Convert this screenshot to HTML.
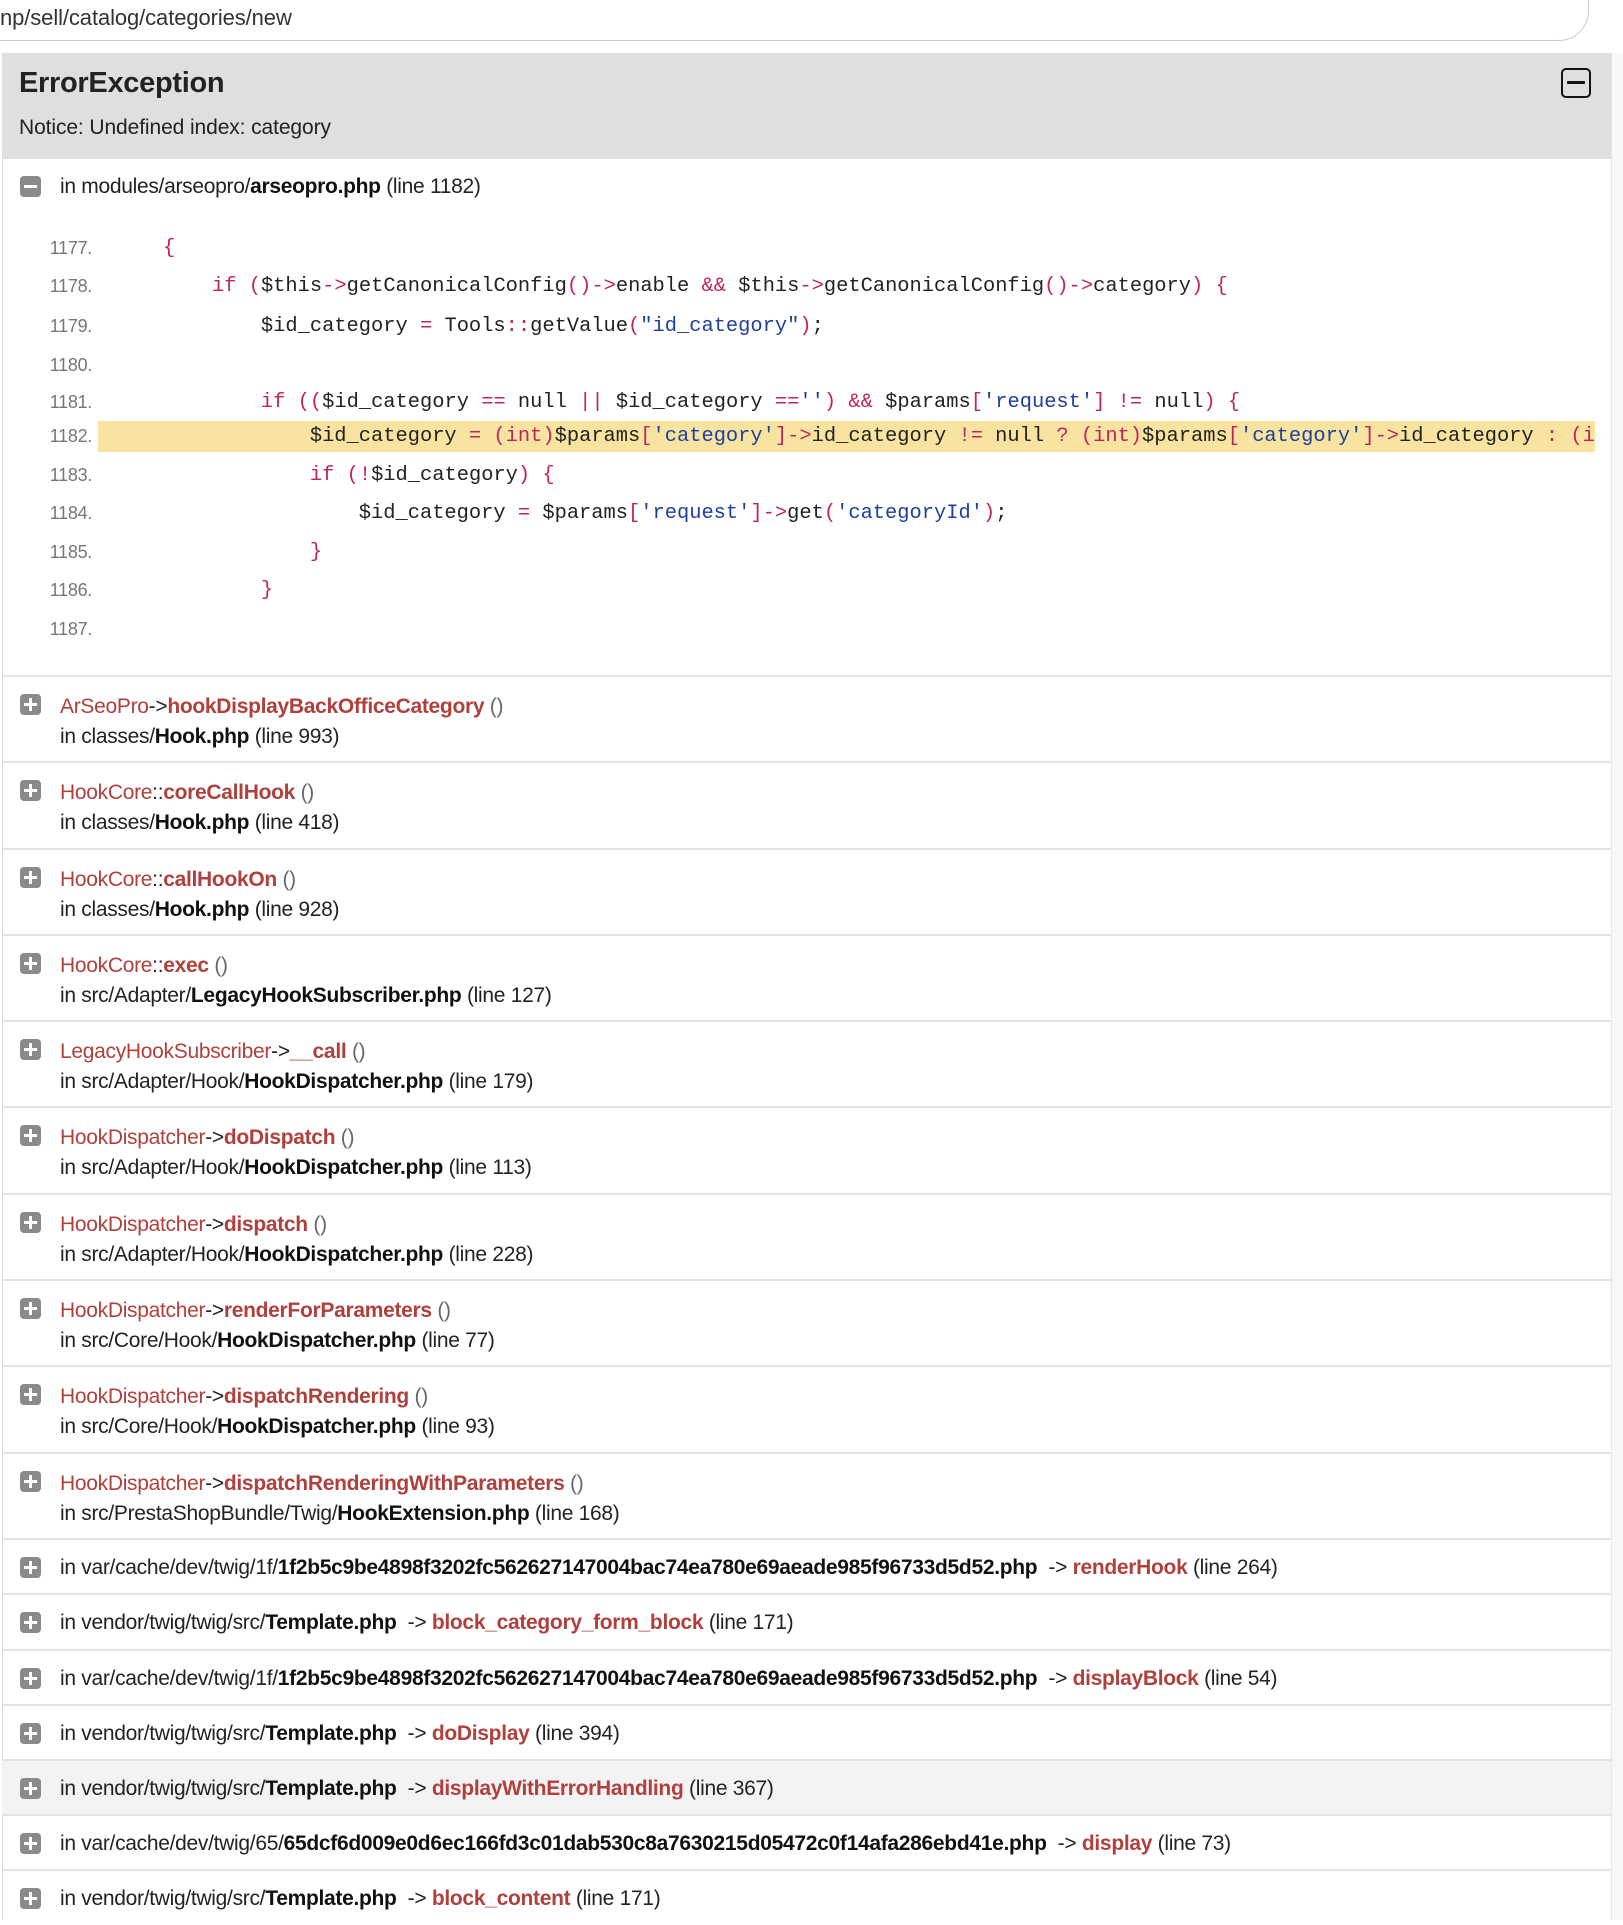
<!DOCTYPE html>
<html><head><meta charset="utf-8">
<style>
*{margin:0;padding:0;box-sizing:border-box}
html,body{width:1623px;height:1920px;overflow:hidden;background:#fff;font-family:"Liberation Sans",Arial,sans-serif;color:#222}
.url{position:absolute;left:-20px;top:-20px;width:1609px;height:61px;border:1.5px solid #ccc;border-radius:0 0 30px 0;border-top:none;border-left:none}
.urltext{position:absolute;left:0;top:5px;font-size:22px;color:#333;letter-spacing:-0.1px}
.side{position:absolute;left:1611px;top:53px;width:12px;height:1867px;background:#f7f7f7;border-left:1px solid #e6e6e6}
.lb{position:absolute;left:2px;top:53px;width:1px;height:1867px;background:#ddd}
.head{position:absolute;left:2px;top:53px;width:1609px;height:106px;background:#dfdfdf}
.head h1{position:absolute;left:17px;top:14px;font-size:29px;font-weight:bold;color:#222;letter-spacing:-0.3px}
.head p{position:absolute;left:17px;top:63px;font-size:21px;color:#222;letter-spacing:-0.1px}
.mbox{position:absolute;left:1559px;top:15px;width:30px;height:30px;border:2.5px solid #111;border-radius:5px}
.mbox:after{content:"";position:absolute;left:4px;right:4px;top:11px;height:3px;background:#111}
.ic{position:absolute;left:20px;width:21px;height:21px;background:#8a8a8a;border-radius:4px}
.ic:before{content:"";position:absolute;left:4px;right:4px;top:9px;height:3px;background:#fff}
.ic.p:after{content:"";position:absolute;top:4px;bottom:4px;left:9px;width:3px;background:#fff}
.t{position:absolute;left:60px;font-size:21px;white-space:nowrap;letter-spacing:-0.3px;color:#222}
.r{color:#b0403c}
b{font-weight:bold;color:#111}
.br{font-weight:bold;color:#b0403c}
.g{color:#666}
.row{position:absolute;left:2px;width:1609px;border-top:2px solid #e3e3e3}
.ln{position:absolute;left:20px;width:72px;text-align:right;font-size:18px;color:#777;letter-spacing:-0.3px}
.cd{position:absolute;left:163px;font-family:"Liberation Mono","DejaVu Sans Mono",monospace;font-size:20.4px;white-space:pre;color:#222;line-height:30px}
.k{color:#c0245e}
.s{color:#1f3f9e}
.hl{position:absolute;left:98px;top:421px;width:1497px;height:31px;background:#f8e3a1}
</style></head><body>
<div class="url"></div>
<div class="urltext">np/sell/catalog/categories/new</div>
<div class="side"></div>
<div class="lb"></div>
<div class="head"><h1>ErrorException</h1><p>Notice: Undefined index: category</p><div class="mbox"></div></div>

<div class="ic" style="top:176px"></div>
<div class="t" style="top:175px">in modules/arseopro/<b>arseopro.php</b> (line 1182)</div>

<div class="hl"></div>
<div class="ln" style="top:238px">1177.</div><div class="cd" style="top:234px"><span class="k">{</span></div>
<div class="ln" style="top:276px">1178.</div><div class="cd" style="top:272px">    <span class="k">if</span> <span class="k">(</span>$this<span class="k">-&gt;</span>getCanonicalConfig<span class="k">()</span><span class="k">-&gt;</span>enable <span class="k">&amp;&amp;</span> $this<span class="k">-&gt;</span>getCanonicalConfig<span class="k">()</span><span class="k">-&gt;</span>category<span class="k">)</span> <span class="k">{</span></div>
<div class="ln" style="top:316px">1179.</div><div class="cd" style="top:312px">        $id_category <span class="k">=</span> Tools<span class="k">::</span>getValue<span class="k">(</span><span class="s">"id_category"</span><span class="k">)</span>;</div>
<div class="ln" style="top:355px">1180.</div>
<div class="ln" style="top:392px">1181.</div><div class="cd" style="top:388px">        <span class="k">if</span> <span class="k">((</span>$id_category <span class="k">==</span> null <span class="k">||</span> $id_category <span class="k">==</span><span class="s">''</span><span class="k">)</span> <span class="k">&amp;&amp;</span> $params<span class="k">[</span><span class="s">'request'</span><span class="k">]</span> <span class="k">!=</span> null<span class="k">)</span> <span class="k">{</span></div>
<div class="ln" style="top:426px">1182.</div><div class="cd" style="top:422px;width:1432px;overflow:hidden">            $id_category <span class="k">=</span> <span class="k">(int)</span>$params<span class="k">[</span><span class="s">'category'</span><span class="k">]-&gt;</span>id_category <span class="k">!=</span> null <span class="k">?</span> <span class="k">(int)</span>$params<span class="k">[</span><span class="s">'category'</span><span class="k">]-&gt;</span>id_category <span class="k">:</span> <span class="k">(int)</span></div>
<div class="ln" style="top:465px">1183.</div><div class="cd" style="top:461px">            <span class="k">if</span> <span class="k">(!</span>$id_category<span class="k">)</span> <span class="k">{</span></div>
<div class="ln" style="top:503px">1184.</div><div class="cd" style="top:499px">                $id_category <span class="k">=</span> $params<span class="k">[</span><span class="s">'request'</span><span class="k">]-&gt;</span>get<span class="k">(</span><span class="s">'categoryId'</span><span class="k">)</span>;</div>
<div class="ln" style="top:542px">1185.</div><div class="cd" style="top:538px">            <span class="k">}</span></div>
<div class="ln" style="top:580px">1186.</div><div class="cd" style="top:576px">        <span class="k">}</span></div>
<div class="ln" style="top:619px">1187.</div>

<div class="row" style="top:675px;height:87px"><div class="ic p" style="top:17px;left:18px"></div><div class="t" style="top:18px;left:58px"><span class="r">ArSeoPro</span>-&gt;<span class="br">hookDisplayBackOfficeCategory</span> <span class="g">()</span></div><div class="t" style="top:48px;left:58px">in classes/<b>Hook.php</b> (line 993)</div></div>
<div class="row" style="top:761px;height:87px"><div class="ic p" style="top:17px;left:18px"></div><div class="t" style="top:18px;left:58px"><span class="r">HookCore</span>::<span class="br">coreCallHook</span> <span class="g">()</span></div><div class="t" style="top:48px;left:58px">in classes/<b>Hook.php</b> (line 418)</div></div>
<div class="row" style="top:848px;height:87px"><div class="ic p" style="top:17px;left:18px"></div><div class="t" style="top:18px;left:58px"><span class="r">HookCore</span>::<span class="br">callHookOn</span> <span class="g">()</span></div><div class="t" style="top:48px;left:58px">in classes/<b>Hook.php</b> (line 928)</div></div>
<div class="row" style="top:934px;height:87px"><div class="ic p" style="top:17px;left:18px"></div><div class="t" style="top:18px;left:58px"><span class="r">HookCore</span>::<span class="br">exec</span> <span class="g">()</span></div><div class="t" style="top:48px;left:58px">in src/Adapter/<b>LegacyHookSubscriber.php</b> (line 127)</div></div>
<div class="row" style="top:1020px;height:87px"><div class="ic p" style="top:17px;left:18px"></div><div class="t" style="top:18px;left:58px"><span class="r">LegacyHookSubscriber</span>-&gt;<span class="br">__call</span> <span class="g">()</span></div><div class="t" style="top:48px;left:58px">in src/Adapter/Hook/<b>HookDispatcher.php</b> (line 179)</div></div>
<div class="row" style="top:1106px;height:87px"><div class="ic p" style="top:17px;left:18px"></div><div class="t" style="top:18px;left:58px"><span class="r">HookDispatcher</span>-&gt;<span class="br">doDispatch</span> <span class="g">()</span></div><div class="t" style="top:48px;left:58px">in src/Adapter/Hook/<b>HookDispatcher.php</b> (line 113)</div></div>
<div class="row" style="top:1193px;height:87px"><div class="ic p" style="top:17px;left:18px"></div><div class="t" style="top:18px;left:58px"><span class="r">HookDispatcher</span>-&gt;<span class="br">dispatch</span> <span class="g">()</span></div><div class="t" style="top:48px;left:58px">in src/Adapter/Hook/<b>HookDispatcher.php</b> (line 228)</div></div>
<div class="row" style="top:1279px;height:87px"><div class="ic p" style="top:17px;left:18px"></div><div class="t" style="top:18px;left:58px"><span class="r">HookDispatcher</span>-&gt;<span class="br">renderForParameters</span> <span class="g">()</span></div><div class="t" style="top:48px;left:58px">in src/Core/Hook/<b>HookDispatcher.php</b> (line 77)</div></div>
<div class="row" style="top:1365px;height:87px"><div class="ic p" style="top:17px;left:18px"></div><div class="t" style="top:18px;left:58px"><span class="r">HookDispatcher</span>-&gt;<span class="br">dispatchRendering</span> <span class="g">()</span></div><div class="t" style="top:48px;left:58px">in src/Core/Hook/<b>HookDispatcher.php</b> (line 93)</div></div>
<div class="row" style="top:1452px;height:87px"><div class="ic p" style="top:17px;left:18px"></div><div class="t" style="top:18px;left:58px"><span class="r">HookDispatcher</span>-&gt;<span class="br">dispatchRenderingWithParameters</span> <span class="g">()</span></div><div class="t" style="top:48px;left:58px">in src/PrestaShopBundle/Twig/<b>HookExtension.php</b> (line 168)</div></div>

<div class="row" style="top:1538px;height:56px"><div class="ic p" style="top:17px;left:18px"></div><div class="t" style="top:16px;left:58px">in var/cache/dev/twig/1f/<b>1f2b5c9be4898f3202fc562627147004bac74ea780e69aeade985f96733d5d52.php</b> &nbsp;-&gt; <span class="br">renderHook</span> (line 264)</div></div>
<div class="row" style="top:1593px;height:56px"><div class="ic p" style="top:17px;left:18px"></div><div class="t" style="top:16px;left:58px">in vendor/twig/twig/src/<b>Template.php</b> &nbsp;-&gt; <span class="br">block_category_form_block</span> (line 171)</div></div>
<div class="row" style="top:1649px;height:56px"><div class="ic p" style="top:17px;left:18px"></div><div class="t" style="top:16px;left:58px">in var/cache/dev/twig/1f/<b>1f2b5c9be4898f3202fc562627147004bac74ea780e69aeade985f96733d5d52.php</b> &nbsp;-&gt; <span class="br">displayBlock</span> (line 54)</div></div>
<div class="row" style="top:1704px;height:56px"><div class="ic p" style="top:17px;left:18px"></div><div class="t" style="top:16px;left:58px">in vendor/twig/twig/src/<b>Template.php</b> &nbsp;-&gt; <span class="br">doDisplay</span> (line 394)</div></div>
<div class="row" style="top:1759px;height:56px;background:#f3f3f3"><div class="ic p" style="top:17px;left:18px"></div><div class="t" style="top:16px;left:58px">in vendor/twig/twig/src/<b>Template.php</b> &nbsp;-&gt; <span class="br">displayWithErrorHandling</span> (line 367)</div></div>
<div class="row" style="top:1814px;height:56px"><div class="ic p" style="top:17px;left:18px"></div><div class="t" style="top:16px;left:58px">in var/cache/dev/twig/65/<b>65dcf6d009e0d6ec166fd3c01dab530c8a7630215d05472c0f14afa286ebd41e.php</b> &nbsp;-&gt; <span class="br">display</span> (line 73)</div></div>
<div class="row" style="top:1869px;height:56px"><div class="ic p" style="top:17px;left:18px"></div><div class="t" style="top:16px;left:58px">in vendor/twig/twig/src/<b>Template.php</b> &nbsp;-&gt; <span class="br">block_content</span> (line 171)</div></div>
</body></html>
